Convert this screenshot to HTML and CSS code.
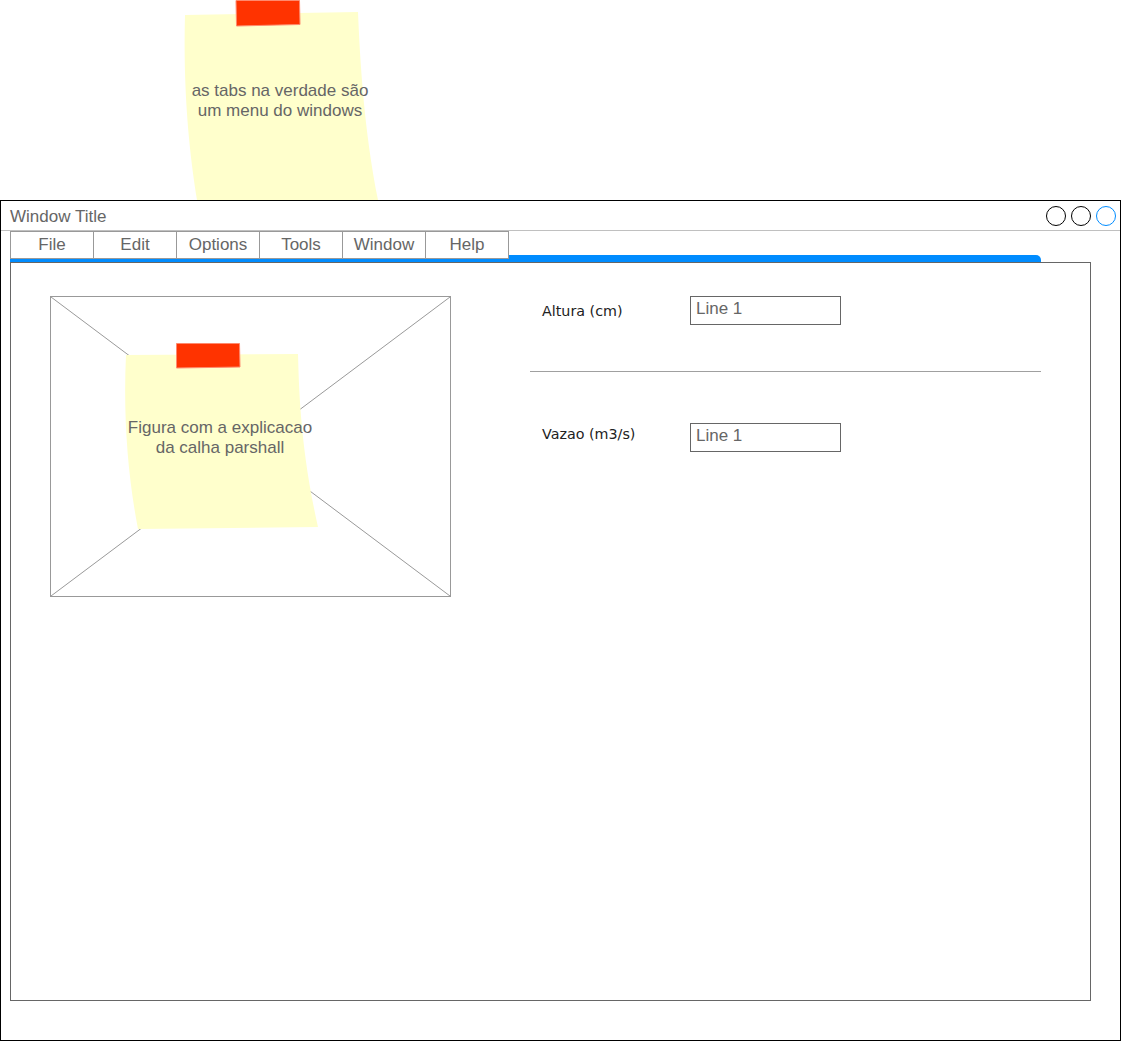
FILE: index.html
```html
<!DOCTYPE html>
<html lang="pt">
<head>
<meta charset="utf-8">
<title>Window</title>
<link rel="stylesheet" href="styles.css">
</head>
<body>
<div class="canvas">
  <div class="note note-top">
    <svg class="note-shape" width="200" height="200" viewBox="0 0 200 200">
      <path d="M5,15 L178,12 C180,60 184,130 198,200 L17,200 C9,150 3,90 5,15 Z" fill="#ffffcc"/>
      <path d="M56,0.5 L119.5,0.5 L120,24.5 L56.5,26 Z" fill="#ff3300" stroke="#ff8a6e" stroke-width="1"/>
    </svg>
    <p class="note-text">as tabs na verdade são<br>um menu do windows</p>
  </div>

  <div class="window">
    <div class="titlebar">
      <span class="title">Window Title</span>
      <div class="controls">
        <span class="ctl"></span>
        <span class="ctl"></span>
        <span class="ctl ctl-blue"></span>
      </div>
    </div>
    <div class="tabs">
      <div class="tab">File</div>
      <div class="tab">Edit</div>
      <div class="tab">Options</div>
      <div class="tab">Tools</div>
      <div class="tab">Window</div>
      <div class="tab">Help</div>
    </div>
    <div class="tabline"></div>
    <div class="content">
      <div class="figure">
        <svg class="figure-x" viewBox="0 0 399 299" preserveAspectRatio="none">
          <line x1="0" y1="0" x2="399" y2="299" stroke="#999" stroke-width="1"/>
          <line x1="399" y1="0" x2="0" y2="299" stroke="#999" stroke-width="1"/>
        </svg>
        <div class="note note-fig">
          <svg class="note-shape" width="200" height="200" viewBox="0 0 200 200">
            <path d="M6,18 L178,17 C179,50 180,110 198,190 L18,192 C8,140 3,80 6,18 Z" fill="#ffffcc"/>
            <path d="M56.5,6.5 L119.5,6.5 L120,30 L56.5,31 Z" fill="#ff3300" stroke="#ff8a6e" stroke-width="1"/>
          </svg>
          <p class="note-text">Figura com a explicacao<br>da calha parshall</p>
        </div>
      </div>
      <div class="form">
        <div class="row">
          <span class="label label-first">Altura (cm)</span>
          <div class="input">Line 1</div>
        </div>
        <div class="divider"></div>
        <div class="row row-second">
          <span class="label label-second">Vazao (m3/s)</span>
          <div class="input">Line 1</div>
        </div>
      </div>
    </div>
  </div>
</div>
</body>
</html>
```

FILE: styles.css
```css
html, body {
  margin: 0;
  padding: 0;
  background: #fff;
}

.canvas {
  position: relative;
  width: 1121px;
  height: 1041px;
  overflow: hidden;
  font-family: "Liberation Sans", Arial, sans-serif;
}

/* sticky notes */
.note {
  position: absolute;
  width: 200px;
  height: 200px;
}

.note-top {
  left: 180px;
  top: 0;
}

.note-fig {
  left: 69px;
  top: 40px;
}

.note-shape {
  position: absolute;
  left: 0;
  top: 0;
}

.note-text {
  position: absolute;
  left: 0;
  top: 0;
  box-sizing: border-box;
  width: 200px;
  height: 200px;
  padding-top: 2px;
  margin: 0;
  display: flex;
  align-items: center;
  justify-content: center;
  text-align: center;
  font-family: "Liberation Sans", Arial, sans-serif;
  font-size: 17px;
  line-height: 20px;
  color: #666;
  white-space: nowrap;
}

/* window */
.window {
  position: relative;
  z-index: 1;
  box-sizing: border-box;
  width: 1121px;
  height: 841px;
  margin-top: 200px;
  border: 1px solid #000;
  background: #fff;
}

.titlebar {
  height: 29px;
  border-bottom: 1px solid #c0c0c0;
  display: flex;
  align-items: center;
  padding: 0 4px 0 9px;
  font-size: 17px;
  color: #666;
}

.title {
  flex: 1;
  line-height: 20px;
  padding-top: 2px;
}

.controls {
  display: flex;
  gap: 5px;
}

.ctl {
  box-sizing: border-box;
  width: 20px;
  height: 20px;
  border: 1px solid #000;
  border-radius: 50%;
}

.ctl-blue {
  border-color: #008cff;
}

.tabs {
  position: relative;
  z-index: 1;
  display: flex;
  margin-left: 9px;
  height: 28px;
}

.tab {
  box-sizing: border-box;
  width: 83px;
  height: 28px;
  border: 1px solid #999;
  border-left: none;
  background: #fff;
  display: flex;
  align-items: center;
  justify-content: center;
  padding-bottom: 1px;
  font-size: 17px;
  line-height: 20px;
  color: #666;
}

.tab:first-child {
  width: 84px;
  border-left: 1px solid #999;
}

.tabline {
  margin: -4px 0 0 9px;
  width: 1031px;
  height: 7px;
  background: #008cff;
  border-top-right-radius: 5px;
}

.content {
  box-sizing: border-box;
  margin-left: 9px;
  width: 1081px;
  height: 739px;
  border: 1px solid #666;
  padding: 33px 0 0 39px;
  display: flex;
  align-items: flex-start;
}

.figure {
  position: relative;
  flex: none;
  box-sizing: border-box;
  width: 401px;
  height: 301px;
  border: 1px solid #999;
}

.figure-x {
  position: absolute;
  left: 0;
  top: 0;
  width: 399px;
  height: 299px;
}

.form {
  margin-left: 79px;
  width: 511px;
  display: flex;
  flex-direction: column;
}

.row {
  display: flex;
  align-items: flex-start;
}

.label {
  box-sizing: border-box;
  width: 160px;
  padding-left: 12px;
  font-family: "DejaVu Sans", Verdana, sans-serif;
  font-size: 14.3px;
  line-height: 18px;
  color: #222;
}

.label-first {
  margin-top: 6px;
}

.label-second {
  margin-top: 2px;
}

.input {
  box-sizing: border-box;
  width: 151px;
  height: 29px;
  border: 1px solid #666;
  padding: 3px 5px 0;
  font-size: 17px;
  line-height: 18px;
  color: #666;
}

.divider {
  margin-top: 46px;
  height: 1px;
  background: #a0a0a0;
}

.row-second {
  margin-top: 51px;
}
```
